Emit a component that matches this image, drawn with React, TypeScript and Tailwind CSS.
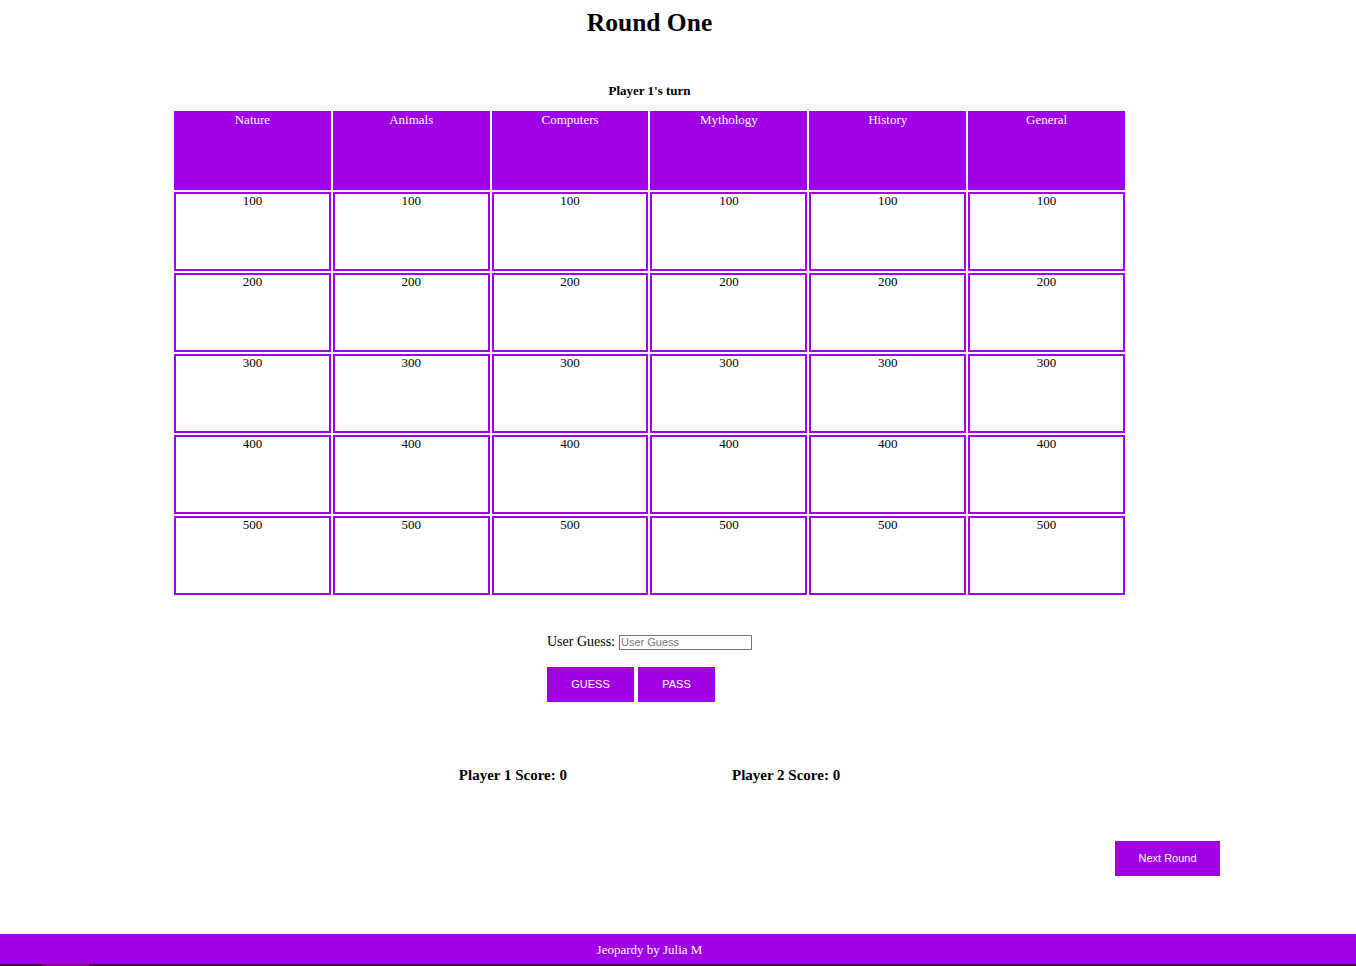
import React from "react";

const categories = ["Nature", "Animals", "Computers", "Mythology", "History", "General"];
const values = [100, 200, 300, 400, 500];

export default function App() {
    return (
        <div className="w-[1356px] h-[966px] overflow-hidden bg-white flex flex-col font-['Liberation_Serif',serif] text-black">
            <div className="w-[1299px] flex flex-col items-center">
                <h1 className="pt-[8px] text-[25.5px] leading-[29px] font-bold">Round One</h1>
                <h5 className="mt-[46px] text-[13px] leading-[15px] font-bold">Player 1's turn</h5>

                <div className="mt-[13px] w-[951px] grid grid-cols-6 gap-[2px] text-[13px] leading-[15px]">
                    {categories.map(cat => (
                        <div key={cat} className="h-[79px] bg-[#a000e5] text-white text-center pt-px">
                            {cat}
                        </div>
                    ))}
                    {values.map(v =>
                        categories.map(cat => (
                            <div key={cat + v} className="h-[79px] border-2 border-[#a000e5] text-center leading-[13px] cursor-pointer">
                                {v}
                            </div>
                        ))
                    )}
                </div>

                <div className="mt-[39px] flex flex-col items-start">
                    <div className="h-[16px] flex items-center gap-[4px]">
                        <label className="text-[14px] leading-[16px]">User Guess:</label>
                        <input
                            type="text"
                            placeholder="User Guess"
                            className="w-[133px] h-[15px] border border-[#767676] px-[1px] text-[11px] font-['Liberation_Sans',sans-serif] placeholder:text-[#757575] outline-none"
                        />
                    </div>

                    <div className="mt-[17px] flex gap-[4px] font-['Liberation_Sans',sans-serif]">
                        <button className="w-[87px] h-[35px] bg-[#a000e5] text-white text-[11px]">GUESS</button>
                        <button className="w-[77px] h-[35px] bg-[#a000e5] text-white text-[11px]">PASS</button>
                    </div>
                </div>

                <div className="mt-[65px] flex gap-[165px] text-[15px] leading-[17px] font-bold">
                    <span>Player 1 Score: 0</span>
                    <span>Player 2 Score: 0</span>
                </div>

                <div className="mt-[57px] w-full flex justify-end pr-[79px]">
                    <button className="w-[105px] h-[35px] bg-[#a000e5] text-white text-[11px] font-['Liberation_Sans',sans-serif]">
                        Next Round
                    </button>
                </div>
            </div>

            <footer className="mt-[58px] w-full h-[30px] bg-[#a000e5] flex items-center">
                <p className="w-[1299px] text-center text-white text-[13px] leading-[15px]">Jeopardy by Julia M</p>
            </footer>
            <div className="w-full h-[2px] bg-[#4a0b4a] flex">
                <div className="ml-[42px] w-[47px] h-full bg-[#8a0a7c]" />
            </div>
        </div>
    );
}
